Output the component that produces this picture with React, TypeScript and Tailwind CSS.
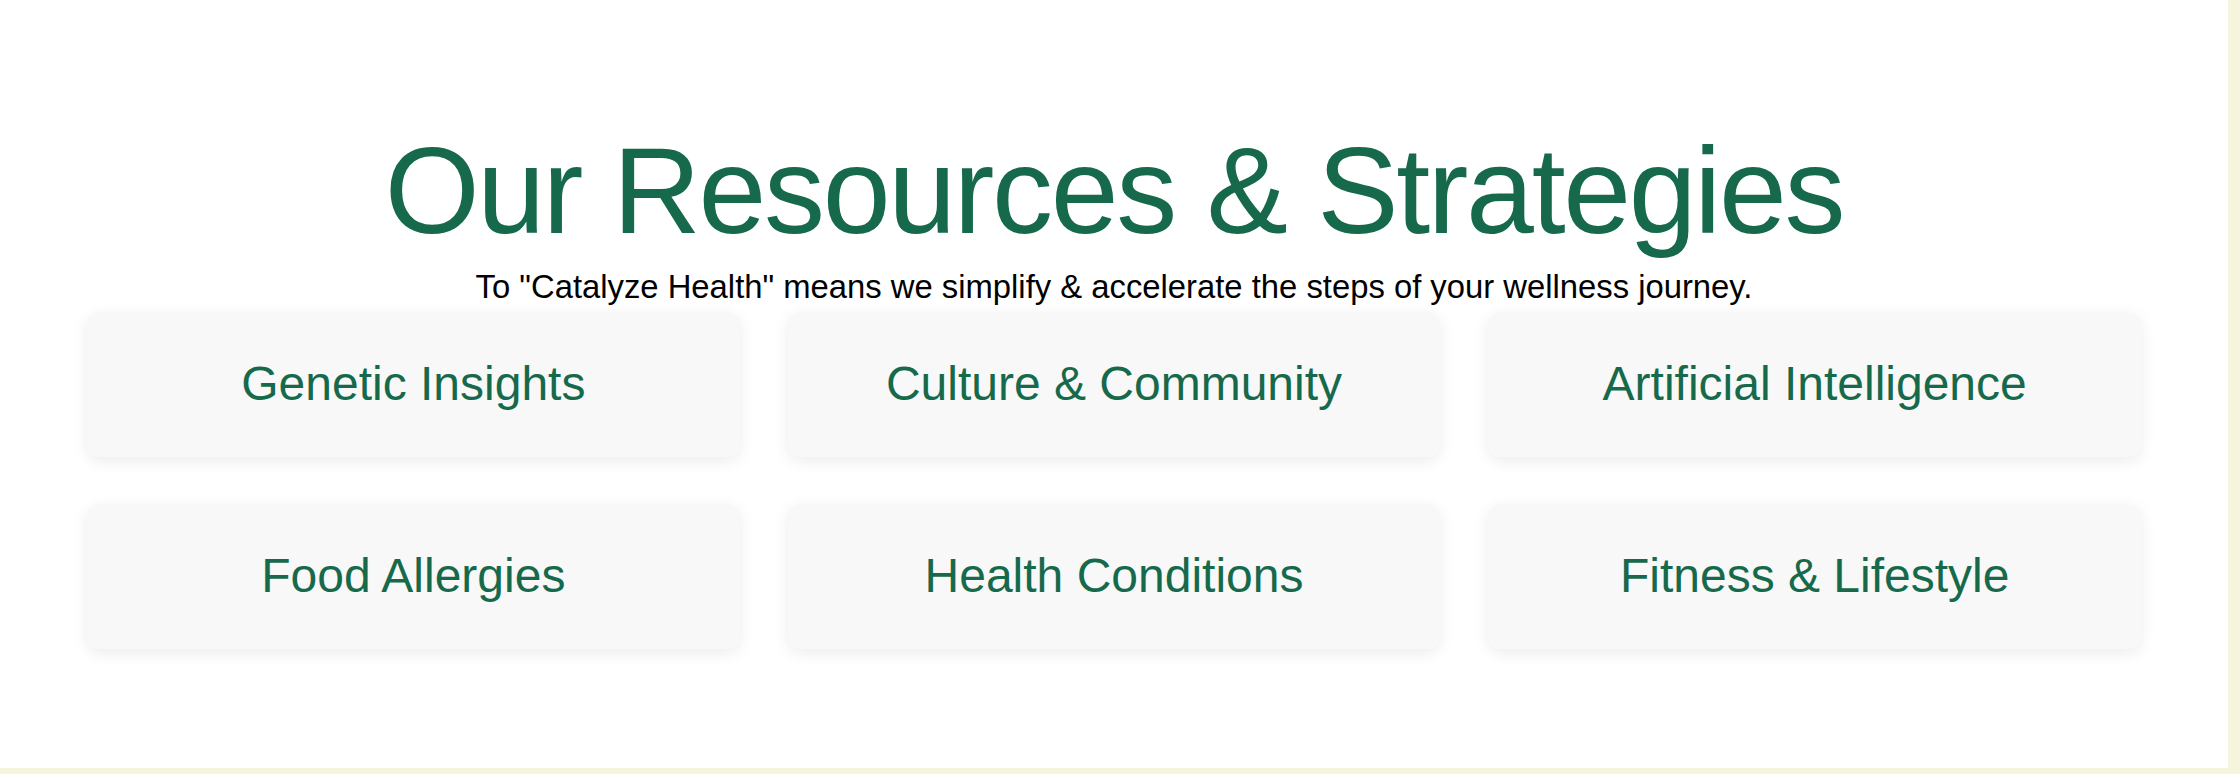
const resources = [
  "Genetic Insights",
  "Culture & Community",
  "Artificial Intelligence",
  "Food Allergies",
  "Health Conditions",
  "Fitness & Lifestyle",
];

const ResourceCard: React.FC<{ title: string }> = ({ title }) => {
  return (
    <div className="flex h-[145px] items-center justify-center rounded-[13px] bg-[#f8f8f8] shadow-[0_4px_16px_rgba(0,0,0,0.08)]">
      <span className="text-5xl leading-none text-[#166a4b]">{title}</span>
    </div>
  );
};

export default function App() {
  return (
    <div className="h-screen w-full bg-[#f5f5dd] font-['Liberation_Sans',Arial,sans-serif]">
      <section className="flex h-[768px] w-[2228px] flex-col items-center bg-white pt-[130px]">
        <h1 className="text-[122px] font-normal leading-none tracking-[-0.019em] text-[#166a4b]">
          Our Resources &amp; Strategies
        </h1>
        <p className="mt-[19px] text-[32.8px] leading-none text-black">
          To "Catalyze Health" means we simplify &amp; accelerate the steps of your wellness journey.
        </p>
        <div className="mt-[8px] grid w-full grid-cols-3 gap-x-[48px] gap-y-[47px] px-[87px]">
          {resources.map((r) => (
            <ResourceCard key={r} title={r} />
          ))}
        </div>
      </section>
    </div>
  );
}
